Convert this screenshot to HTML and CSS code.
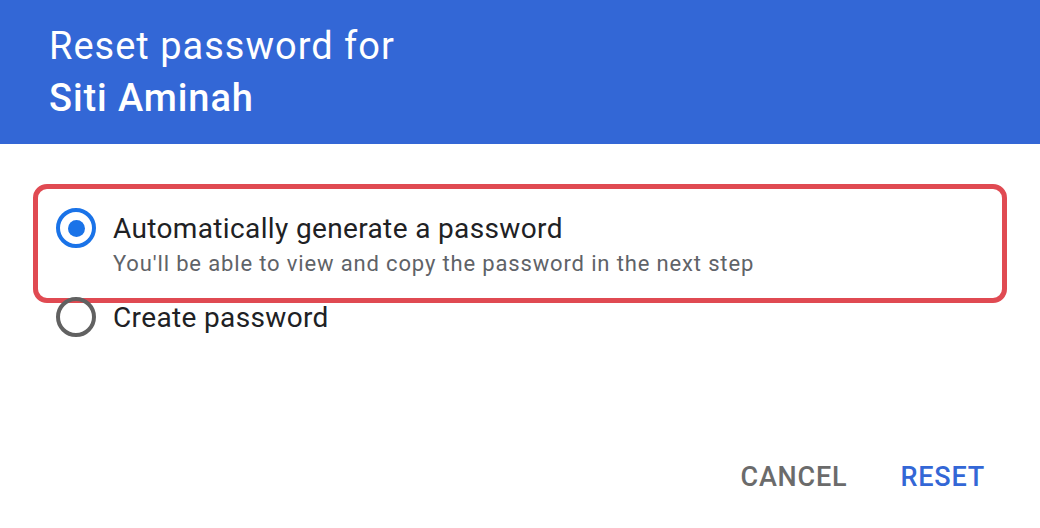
FILE: index.html
```html
<!DOCTYPE html>
<html>
<head>
<meta charset="utf-8">
<link rel="stylesheet" href="styles.css">
</head>
<body>
<div class="dialog">
  <header class="head">
    <div class="title">Reset password for</div>
    <div class="name">Siti Aminah</div>
  </header>
  <main class="body">
    <div class="option highlighted">
      <span class="radio checked"></span>
      <div class="labels">
        <div class="label">Automatically generate a password</div>
        <div class="hint">You'll be able to view and copy the password in the next step</div>
      </div>
    </div>
    <div class="option plain">
      <span class="radio"></span>
      <div class="labels">
        <div class="label">Create password</div>
      </div>
    </div>
  </main>
  <footer class="actions">
    <span class="btn cancel">CANCEL</span>
    <span class="btn reset">RESET</span>
  </footer>
</div>
</body>
</html>
```
FILE: styles.css
```css
* { box-sizing: border-box; }
html, body { margin: 0; padding: 0; background: #fff; }
body { font-family: Roboto, "Noto Sans", Arial, sans-serif; width: 1040px; height: 528px; overflow: hidden; }
.dialog { display: flex; flex-direction: column; height: 528px; }
.head { background: #3367d6; color: #fff; height: 144px; padding: 20px 49px 0; }
.title { font-size: 38px; line-height: 52px; font-weight: 400; letter-spacing: 1px; }
.name { font-size: 38px; line-height: 52px; font-weight: 500; letter-spacing: 0.9px; }
.body { padding: 40px 33px 0; flex: 1; }
.option { display: flex; align-items: flex-start; }
.highlighted { border: 5px solid #e04a52; border-radius: 14px; height: 119px; padding: 19px 0 0 18px; }
.plain { padding: 0 0 0 23px; margin-top: -6px; }
.radio { width: 40px; height: 40px; border-radius: 50%; border: 4px solid #616161; flex: none; margin-right: 17px; display: flex; align-items: center; justify-content: center; }
.radio.checked { border-color: #1a73e8; }
.radio.checked::after { content: ""; width: 17px; height: 17px; border-radius: 50%; background: #1a73e8; }
.labels { padding-top: 1px; }
.label { font-size: 28px; line-height: 40px; color: #202124; letter-spacing: 0.36px; }
.hint { font-size: 22px; line-height: 30px; color: #5f6368; letter-spacing: 0.85px; }
.actions { display: flex; justify-content: flex-end; gap: 53px; padding: 0 55px 35px 0; }
.btn { font-size: 27px; font-weight: 500; letter-spacing: 0.8px; line-height: 32px; }
.cancel { color: #6b6b6b; }
.reset { color: #3367d6; }
```
